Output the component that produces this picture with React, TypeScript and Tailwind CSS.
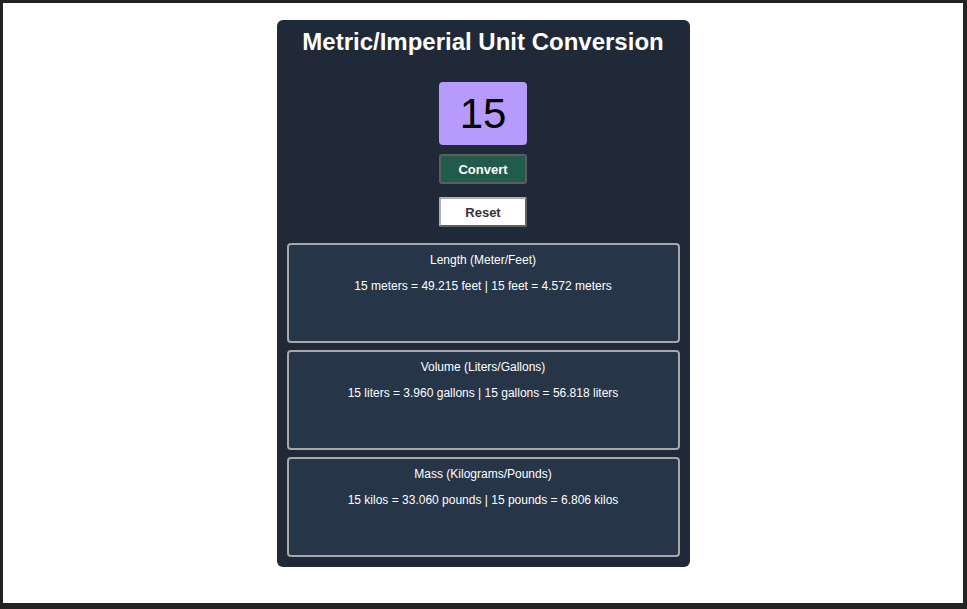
import React, { useState } from 'react';

const CONVERSIONS = [
  {
    title: 'Length (Meter/Feet)',
    text: (n: number) =>
      `${n} meters = ${(n * 3.281).toFixed(3)} feet | ${n} feet = ${(n / 3.281).toFixed(3)} meters`,
  },
  {
    title: 'Volume (Liters/Gallons)',
    text: (n: number) =>
      `${n} liters = ${(n * 0.264).toFixed(3)} gallons | ${n} gallons = ${(n / 0.264).toFixed(3)} liters`,
  },
  {
    title: 'Mass (Kilograms/Pounds)',
    text: (n: number) =>
      `${n} kilos = ${(n * 2.204).toFixed(3)} pounds | ${n} pounds = ${(n / 2.204).toFixed(3)} kilos`,
  },
];

const App: React.FC = () => {
  const [value, setValue] = useState('15');
  const [num, setNum] = useState(15);

  return (
    <div className="h-[609px] w-full bg-white border-t-[3px] border-l-[3px] border-r-[4px] border-b-[6px] border-[#232323] font-['Liberation_Sans',Arial,sans-serif]">
      <div className="flex justify-center pt-[17px]">
        <div className="w-[413px] h-[547px] bg-[#1f2937] rounded-[6px] flex flex-col items-center pt-[8px] px-[10px]">
          <h1 className="text-white font-bold text-[24px] leading-[28px]">Metric/Imperial Unit Conversion</h1>

          <input
            value={value}
            onChange={(e) => setValue(e.target.value)}
            className="mt-[26px] w-[88px] h-[63px] bg-[#b69afc] rounded-[4px] text-center text-[42px] text-black outline-none"
          />

          <button
            onClick={() => setNum(Number(value) || 0)}
            className="mt-[9px] w-[88px] h-[30px] pt-[2px] bg-[#225a4b] border-2 border-[#5c5c5c] rounded-[3px] text-white font-bold text-[13px]"
          >
            Convert
          </button>

          <button
            onClick={() => {
              setValue('');
              setNum(0);
            }}
            className="mt-[13px] w-[88px] h-[30px] pt-[1px] bg-white border-2 border-t-[#b0b0b0] border-l-[#b0b0b0] border-r-[#606060] border-b-[#606060] rounded-[2px] text-[#333] font-bold text-[13px]"
          >
            Reset
          </button>

          <div className="mt-[16px] w-full flex flex-col gap-[7px]">
            {CONVERSIONS.map((c) => (
              <div
                key={c.title}
                className="h-[100px] bg-[#273549] border-2 border-[#a8a8a8] rounded-[4px] text-white text-[12px] text-center pt-[8px]"
              >
                <p className="leading-[14px]">{c.title}</p>
                <p className="leading-[14px] mt-[12px]">{c.text(num)}</p>
              </div>
            ))}
          </div>
        </div>
      </div>
    </div>
  );
};

export default App;
